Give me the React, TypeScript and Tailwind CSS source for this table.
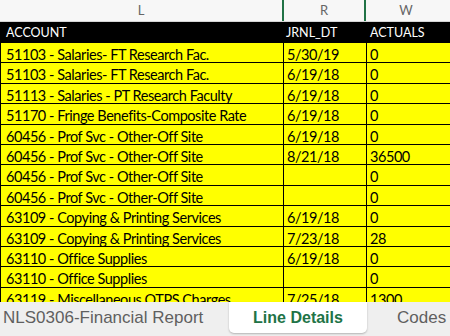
const rows: [string, string, string][] = [
  ["51103 - Salaries- FT Research Fac.", "5/30/19", "0"],
  ["51103 - Salaries- FT Research Fac.", "6/19/18", "0"],
  ["51113 - Salaries - PT Research Faculty", "6/19/18", "0"],
  ["51170 - Fringe Benefits-Composite Rate", "6/19/18", "0"],
  ["60456 - Prof Svc - Other-Off Site", "6/19/18", "0"],
  ["60456 - Prof Svc - Other-Off Site", "8/21/18", "36500"],
  ["60456 - Prof Svc - Other-Off Site", "", "0"],
  ["60456 - Prof Svc - Other-Off Site", "", "0"],
  ["63109 - Copying & Printing Services", "6/19/18", "0"],
  ["63109 - Copying & Printing Services", "7/23/18", "28"],
  ["63110 - Office Supplies", "6/19/18", "0"],
  ["63110 - Office Supplies", "", "0"],
  ["63119 - Miscellaneous OTPS Charges", "7/25/18", "1300"],
];

const cellFont = { fontFamily: "Lato, 'Open Sans', sans-serif" };

export default function App() {
  return (
    <div className="w-[450px] h-[336px] flex flex-col overflow-hidden bg-white">
      {/* column letters */}
      <div className="h-[22px] shrink-0 grid grid-cols-[282px_84px_1fr] bg-[#f7f7f7] border-b border-[#d4d4d4] text-[13px] text-[#666]" style={cellFont}>
        <div className="flex items-center justify-center">L</div>
        <div className="flex items-center justify-center border-x-2 border-[#217346]">R</div>
        <div className="flex items-center justify-center pr-[4px]">W</div>
      </div>

      {/* sheet */}
      <div className="flex-1 overflow-hidden" style={cellFont}>
        <div className="h-[21px] grid grid-cols-[283px_83px_1fr] bg-black text-white text-[12.5px]">
          <div className="flex items-center pl-[6px] pt-[1px]">ACCOUNT</div>
          <div className="flex items-center pl-[3px] pt-[1px]">JRNL_DT</div>
          <div className="flex items-center pl-[4px] pt-[1px]">ACTUALS</div>
        </div>
        {rows.map((r, i) => (
          <div key={i} className="h-[20.4px] grid grid-cols-[283px_83px_1fr] bg-[#ffff00] border-b border-l border-black text-[14.5px] tracking-[-0.45px] text-black">
            <div className="flex items-center pl-[5px] pt-[1px] border-r border-black whitespace-nowrap overflow-hidden">{r[0]}</div>
            <div className="flex items-center pl-[3px] pt-[1px] border-r border-black">{r[1]}</div>
            <div className="flex items-center pl-[3px] pt-[1px]">{r[2]}</div>
          </div>
        ))}
      </div>

      {/* sheet tabs */}
      <div className="h-[34px] shrink-0 flex items-start bg-[#efefef] whitespace-nowrap" style={{ fontFamily: "'Liberation Sans', Arial, sans-serif" }}>
        <div className="h-[31px] flex items-center pl-[3px] text-[17px] text-[#5f5f5f] w-[229px]">NLS0306-Financial Report</div>
        <div className="h-[31px] w-[138px] flex items-center justify-center bg-white rounded-b-[5px] shadow-[0_1px_2px_rgba(0,0,0,0.25)] text-[16px] font-bold text-[#217346]">
          Line Details
        </div>
        <div className="h-[31px] flex items-center pl-[30px] text-[17px] text-[#5f5f5f]">Codes</div>
      </div>
    </div>
  );
}
